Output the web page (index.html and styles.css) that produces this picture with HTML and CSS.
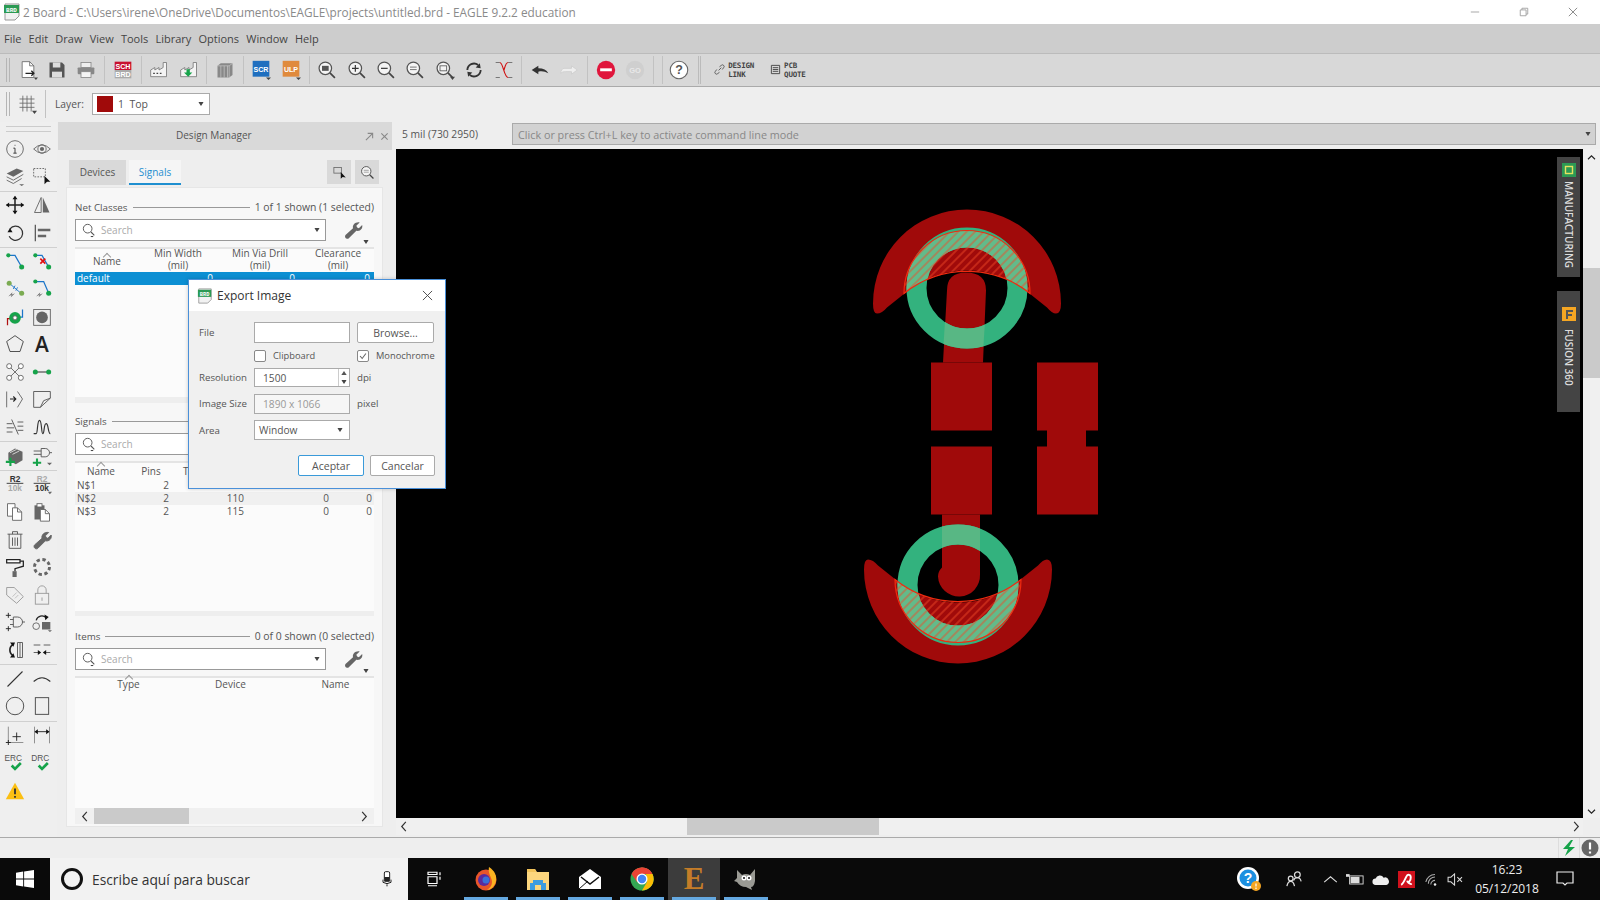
FILE: index.html
```html
<!DOCTYPE html>
<html lang="es">
<head>
    <meta charset="UTF-8">
    <title>2 Board - EAGLE 9.2.2 education</title>
    <link rel="stylesheet" href="styles.css">
</head>
<body>
    <!-- Shared icons -->
    <svg class="defs" width="0" height="0">
        <symbol id="wrench" viewBox="0 0 24 24"><path d="M20 3l-4 4 1 2 2 1 4-4c1 4-2 8-7 7L7 22c-2 2-6-1-4-4l9-8C11 6 15 2 20 3z" fill="#666"/></symbol>
        <symbol id="find" viewBox="0 0 24 24"><circle cx="10" cy="10" r="6.5" fill="none" stroke="#555" stroke-width="1.4"/><path d="M15 15l5 5" stroke="#555" stroke-width="1.6"/><path d="M14 21h5l-2.500 2z" fill="#222"/></symbol>
        <symbol id="lens" viewBox="0 0 24 24"><circle cx="10" cy="10" r="7.500" fill="#f4f4f4" stroke="#555" stroke-width="1.500"/><path d="M15.500 15.500l6 6" stroke="#444" stroke-width="2"/></symbol>
        <symbol id="tri" viewBox="0 0 8 6"><path d="M0 0h8l-4 6z" fill="#444"/></symbol>
    </svg>

    <!-- Title bar -->
    <header class="titlebar">
        <svg class="app-icon" viewBox="0 0 18 18"><path d="M2 1h14v12l-4 4H2z" fill="#f2f2f2" stroke="#999"/><rect x="1" y="2" width="15" height="8" fill="#2c9a54"/><text x="8.500" y="8.500" class="brd-text">BRD</text></svg>
        <span class="title-text">2 Board - C:\Users\irene\OneDrive\Documentos\EAGLE\projects\untitled.brd - EAGLE 9.2.2 education</span>
        <div class="win-buttons">
            <svg viewBox="0 0 12 12"><path d="M1 6h10" stroke="#999"/></svg>
            <svg viewBox="0 0 12 12"><path d="M1.500 3.500h7v7h-7zM3.500 3.500v-2h7v7h-2" fill="none" stroke="#999"/></svg>
            <svg viewBox="0 0 12 12"><path d="M1 1l10 10M11 1L1 11" stroke="#777"/></svg>
        </div>
    </header>

    <!-- Menu -->
    <nav class="menubar">
        <span>File</span><span>Edit</span><span>Draw</span><span>View</span><span>Tools</span><span>Library</span><span>Options</span><span>Window</span><span>Help</span>
    </nav>

    <!-- Main toolbar -->
    <div class="toolbar">
        <div class="grip"></div>
        <div class="tb"><svg viewBox="0 0 24 24"><path d="M5 2h9l5 5v14H5z" fill="#fff" stroke="#666"/><path d="M14 2v5h5" fill="none" stroke="#666"/><path d="M9 16h10M16 13l3 3-3 3" fill="none" stroke="#222" stroke-width="1.600"/><path d="M19 21h5l-2.500 3z" fill="#444"/></svg></div>
        <div class="tb"><svg viewBox="0 0 24 24"><path d="M3 3h15l3 3v15H3z" fill="#555"/><rect x="7" y="3" width="9" height="6" fill="#ddd"/><rect x="6" y="14" width="12" height="7" fill="#ddd"/></svg></div>
        <div class="tb"><svg viewBox="0 0 24 24"><rect x="6" y="3" width="12" height="6" fill="#eee" stroke="#888"/><rect x="2" y="9" width="20" height="8" rx="1" fill="#888"/><rect x="6" y="14" width="12" height="7" fill="#f4f4f4" stroke="#888"/></svg></div>
        <div class="sep"></div>
        <div class="tb"><svg viewBox="0 0 24 24"><rect x="2" y="2" width="20" height="10" fill="#c8102e"/><rect x="2" y="12" width="20" height="10" fill="#aaa"/><text x="12" y="10.500" class="badge-text">SCH</text><text x="12" y="20.500" class="badge-text">BRD</text></svg></div>
        <div class="sep"></div>
        <div class="tb"><svg viewBox="0 0 24 24"><path d="M2 20V12l5-3v3l5-3v3l5-3V3h4v17z" fill="#f4f4f4" stroke="#777"/><path d="M5 16h2M9 16h2M13 16h2" stroke="#444" stroke-width="1.500"/></svg></div>
        <div class="tb"><svg viewBox="0 0 24 24"><path d="M2 20V12l5-3v3l5-3v3l5-3V3h4v17z" fill="#f4f4f4" stroke="#777"/><path d="M9 11h4v4h3l-5 5-5-5h3z" fill="#16a34a"/></svg></div>
        <div class="sep"></div>
        <div class="tb"><svg viewBox="0 0 24 24"><path d="M3 7l4-3h14v14l-4 3H3z" fill="#888"/><path d="M7 7v14M11 7v14M15 7v14M3 7h14l4-3M17 7v14" fill="none" stroke="#ccc" stroke-width=".8"/></svg></div>
        <div class="sep"></div>
        <div class="tb"><svg viewBox="0 0 24 24"><rect x="2" y="1" width="20" height="19" fill="#1f6fbf"/><text x="12" y="14" class="badge-text">SCR</text><path d="M18 21h6l-3 3z" fill="#444"/></svg></div>
        <div class="tb"><svg viewBox="0 0 24 24"><rect x="2" y="1" width="20" height="19" fill="#e08a3c"/><text x="12" y="14" class="badge-text">ULP</text><path d="M18 21h6l-3 3z" fill="#444"/></svg></div>
        <div class="sep"></div>
        <div class="tb"><svg viewBox="0 0 24 24"><use href="#lens"/><rect x="6" y="7" width="8" height="6" fill="#555"/></svg></div>
        <div class="tb"><svg viewBox="0 0 24 24"><use href="#lens"/><path d="M6 10h8M10 6v8" stroke="#333" stroke-width="1.400"/></svg></div>
        <div class="tb"><svg viewBox="0 0 24 24"><use href="#lens"/><path d="M6 10h8" stroke="#333" stroke-width="1.400"/></svg></div>
        <div class="tb"><svg viewBox="0 0 24 24"><use href="#lens"/><path d="M6 8.500h8M6 11.500h8" stroke="#777" stroke-width="1.200"/></svg></div>
        <div class="tb"><svg viewBox="0 0 24 24"><use href="#lens"/><rect x="6" y="7" width="8" height="6" fill="none" stroke="#555"/><path d="M18 20h6l-3 4z" fill="#444"/></svg></div>
        <div class="tb"><svg viewBox="0 0 24 24"><path d="M4 12a8 8 0 0 1 13-6M20 12a8 8 0 0 1-13 6" fill="none" stroke="#333" stroke-width="2.200"/><path d="M14 9l6 1-1-6zM10 15l-6-1 1 6z" fill="#333"/></svg></div>
        <div class="tb"><svg viewBox="0 0 24 24"><path d="M2 3h5M17 3h5M2 21h5M17 21h5" stroke="#777" stroke-width="1.200"/><path d="M7 3c4 0 5 18 10 18M17 3c-3 0-4 6-5 9" fill="none" stroke="#d01010" stroke-width="1.400"/></svg></div>
        <div class="sep"></div>
        <div class="tb"><svg viewBox="0 0 24 24"><path d="M2 12l8-5v3c6 0 10 2 12 6-4-2-7-3-12-2v3z" fill="#333"/></svg></div>
        <div class="tb"><svg viewBox="0 0 24 24"><path d="M22 12l-7-5v3H6c-2 0-4 3-4 6 2-2 4-2 6-2h7v3z" fill="#eee" stroke="#ccc"/></svg></div>
        <div class="sep"></div>
        <div class="tb"><svg viewBox="0 0 24 24"><circle cx="12" cy="12" r="11" fill="#e0163c"/><rect x="5" y="10" width="14" height="3.500" fill="#fff"/></svg></div>
        <div class="tb"><svg viewBox="0 0 24 24"><circle cx="12" cy="12" r="11" fill="#cfcfcf"/><text x="12" y="15" class="go-text">GO</text></svg></div>
        <div class="sep"></div>
        <div class="sep tight"></div>
        <div class="tb"><svg viewBox="0 0 24 24"><circle cx="12" cy="12" r="10.500" fill="#fff" stroke="#666" stroke-width="1.300"/><text x="12" y="17" class="help-text">?</text></svg></div>
        <div class="sep double"></div>
        <div class="tb-text link">
            <svg viewBox="0 0 12 12"><path d="M5 7l3-3M3 6L1.500 8a1.500 1.500 0 0 0 2.500 2.500L6 9M6 3l2-1.500A1.500 1.500 0 0 1 10.500 4L9 6" fill="none" stroke="#555"/></svg>
            <span>DESIGN<br>LINK</span>
        </div>
        <div class="tb-text quote">
            <svg viewBox="0 0 12 12"><path d="M1.500 1.500h9v9h-9zM3 4h6M3 6h6M3 8h6" fill="none" stroke="#444"/></svg>
            <span>PCB<br>QUOTE</span>
        </div>
    </div>

    <!-- Layer toolbar -->
    <div class="layerbar">
        <div class="grip"></div>
        <div class="grid-btn"><svg viewBox="0 0 24 24"><path d="M3 6h18M3 11h18M3 16h18M7 2v19M12 2v19M17 2v19" stroke="#666"/><path d="M18 20h6l-3 4z" fill="#444"/></svg></div>
        <div class="sep"></div>
        <span class="layer-label">Layer:</span>
        <div class="layer-combo">
            <span class="swatch"></span>
            <span class="layer-name">1&nbsp; Top</span>
            <svg class="tri" viewBox="0 0 8 6"><use href="#tri"/></svg>
        </div>
    </div>

    <div class="main">
        <!-- Left command strip -->
        <aside class="toolstrip">
            <div class="strip-grip"></div>
            <div class="tool-group">
                <svg viewBox="0 0 24 24"><circle cx="12" cy="12" r="10"/><path d="M12 7v1M10 11h2v6M10 17h4" stroke="#333"/></svg>
                <svg viewBox="0 0 24 24"><path d="M2 12q10-10 20 0q-10 10-20 0z"/><circle cx="12" cy="12" r="5"/><circle cx="12" cy="12" r="2.500" class="solid"/></svg>
                <svg viewBox="0 0 24 24"><path d="M2 9l12-6 8 3-12 7z" class="solid"/><path d="M2 13l8 4 12-7M2 17l8 4 10-6"/><path d="M17 22h6l-3 2z" class="solid"/></svg>
                <svg viewBox="0 0 24 24"><path d="M2 3h14v10H2z" stroke-dasharray="2 1.500"/><path d="M15 12v10l3-3 4 0z" class="black"/></svg>
            </div>
            <div class="tool-group">
                <svg viewBox="0 0 24 24"><path d="M12 2v20M2 12h20" stroke="#222" stroke-width="1.800"/><path d="M12 1l3 4H9zM12 23l3-4H9zM1 12l4-3v6zM23 12l-4-3v6z" class="black"/></svg>
                <svg viewBox="0 0 24 24"><path d="M11 3v18H3z"/><path d="M13 3v18h8z" class="solid"/></svg>
                <svg viewBox="0 0 24 24"><path d="M6 7a8.500 8.500 0 1 1-1 9" stroke="#333" stroke-width="1.500"/><path d="M3 11l6 0-3-5z" class="black"/></svg>
                <svg viewBox="0 0 24 24"><path d="M4 2v20" stroke="#555" stroke-width="1.500"/><path d="M7 7h15v3H7zM7 14h10v3H7z" class="solid"/></svg>
            </div>
            <div class="tool-group">
                <svg viewBox="0 0 24 24"><path d="M4 4h8l8 14" stroke="#1b75c9" stroke-width="1.500"/><circle cx="4" cy="4" r="2.500" class="node"/><circle cx="20" cy="18" r="3" class="node"/></svg>
                <svg viewBox="0 0 24 24"><path d="M4 4h8l8 14" stroke="#1b75c9" stroke-width="1.500"/><circle cx="4" cy="4" r="2.500" class="node"/><circle cx="20" cy="18" r="3" class="node"/><path d="M10 8l6 6M16 8l-6 6" stroke="#e01010" stroke-width="2"/></svg>
                <svg viewBox="0 0 24 24"><path d="M5 5l14 12M12 8l-2 4M15 10l-2 4" stroke="#1b75c9"/><circle cx="5" cy="5" r="3" class="dim-node"/><circle cx="20" cy="17" r="3" class="dim-node"/><path d="M4 21l5-5-1 3 4-2-5 5 1-3z" class="solid"/></svg>
                <svg viewBox="0 0 24 24"><path d="M4 3h10l6 14" stroke="#1b75c9" stroke-width="1.500"/><circle cx="4" cy="3" r="2.500" class="node"/><circle cx="20" cy="17" r="3" class="node"/><path d="M5 21l5-5-1 3 4-2-5 5 1-3z" class="solid"/></svg>
                <svg viewBox="0 0 24 24"><path d="M3 22v-8h6" stroke="#b01010" stroke-width="1.500"/><path d="M15 12h6V3" stroke="#1b75c9" stroke-width="1.500"/><circle cx="12" cy="13" r="7" class="node"/><circle cx="12" cy="13" r="2.500" class="white"/></svg>
                <svg viewBox="0 0 24 24"><rect x="2" y="3" width="20" height="19"/><circle cx="12" cy="12.500" r="7" class="solid"/></svg>
                <svg viewBox="0 0 24 24"><path d="M12 2l10 7-4 12H6L2 9z" stroke="#444"/></svg>
                <svg viewBox="0 0 24 24"><text x="12" y="22" class="letter">A</text></svg>
                <svg viewBox="0 0 24 24"><path d="M5 5l14 14M19 5L5 19"/><circle cx="5" cy="5" r="3" class="white"/><circle cx="19" cy="5" r="3" class="white"/><circle cx="5" cy="19" r="3" class="white"/><circle cx="19" cy="19" r="3" class="white"/></svg>
                <svg viewBox="0 0 24 24"><path d="M3 12h18" stroke="#555" stroke-width="1.500"/><circle cx="4" cy="12" r="3" class="node"/><circle cx="20" cy="12" r="3" class="node"/></svg>
                <svg viewBox="0 0 24 24"><path d="M2 3v19M15 3l6 9-6 10" stroke="#666"/><path d="M6 12h7M10 9l3 3-3 3" stroke="#222" stroke-width="1.300"/></svg>
                <svg viewBox="0 0 24 24"><path d="M2 3h20v8L10 22H2zM10 22l4-8M14 14l8-3" stroke="#555"/></svg>
                <svg viewBox="0 0 24 24"><path d="M2 8h7M2 13h9M2 18h7M15 6h7M15 11h7M15 16h7M8 3l8 18" stroke="#555"/></svg>
                <svg viewBox="0 0 24 24"><path d="M2 20h3c2 0 1-16 4-16s2 16 4 16 1-12 4-12 2 12 5 12" stroke="#333" stroke-width="1.400"/></svg>
            </div>
            <div class="tool-group">
                <svg viewBox="0 0 24 24"><path d="M4 8l8-5 9 4v10l-8 5-9-5z" class="solid"/><path d="M6 8l8-4M9 10l8-4" stroke="#ddd"/><path d="M1 19h11M6.500 14v10" stroke="#16a34a" stroke-width="2.500"/></svg>
                <svg viewBox="0 0 24 24"><path d="M11 3h5a5 5 0 0 1 0 10h-5zM2 6h9M2 10h9M21 8h3" stroke="#555"/><path d="M1 20h10M6 15v9" stroke="#16a34a" stroke-width="2.500"/><path d="M18 20h6l-3 3z" class="solid"/></svg>
            </div>
            <div class="tool-group">
                <svg viewBox="0 0 24 24"><text x="12" y="8" class="r-text">R2</text><path d="M2 10h20" stroke="#333"/><text x="12" y="19" class="r-text dim">10k</text></svg>
                <svg viewBox="0 0 24 24"><text x="12" y="8" class="r-text dim">R2</text><path d="M2 10h20" stroke="#333"/><text x="12" y="19" class="r-text">10k</text><path d="M19 20h5l-2.500 3z" class="solid"/></svg>
                <svg viewBox="0 0 24 24"><path d="M3 2h9v15H3z" class="white"/><path d="M9 7h6l5 5v10H9z" class="white"/><path d="M15 7v5h5"/></svg>
                <svg viewBox="0 0 24 24"><path d="M3 4h12v17H3z" class="solid"/><rect x="6" y="2" width="6" height="4" class="white"/><path d="M10 9h6l5 5v9H10z" class="white"/><path d="M16 9v5h5"/></svg>
                <svg viewBox="0 0 24 24"><path d="M3 5h18M9 5V2h6v3M5 5v17h14V5M9 9v10M12 9v10M15 9v10" stroke="#555"/></svg>
                <svg viewBox="0 0 24 24"><use href="#wrench"/></svg>
                <svg viewBox="0 0 24 24"><path d="M2 3h16v4H2z" class="white" stroke="#222" stroke-width="1.500"/><path d="M18 5h4v6l-10 3v3" stroke="#222" stroke-width="1.500"/><rect x="9" y="17" width="5" height="7" class="solid"/></svg>
                <svg viewBox="0 0 24 24"><circle cx="12" cy="12" r="9" stroke="#666" stroke-width="3.500" stroke-dasharray="4 3.100"/></svg>
                <svg viewBox="0 0 24 24" class="faded"><path d="M2 3h9l11 11-8 8L2 12zM6 7h.1" stroke="#777"/><path d="M9 14l5-5M12 16l4-4" stroke="#aaa"/></svg>
                <svg viewBox="0 0 24 24" class="faded"><rect x="4" y="10" width="16" height="13" stroke="#777"/><path d="M7 10V6a5 5 0 0 1 10 0v4M12 15v4" stroke="#777"/></svg>
                <svg viewBox="0 0 24 24"><path d="M10 6h5a6 6 0 0 1 0 12h-5zM21 12h3M6 9h4M6 15h4" stroke="#555"/><path d="M1 4h6M4 1v6M1 20h6M4 17v6" stroke="#222"/></svg>
                <svg viewBox="0 0 24 24"><circle cx="5" cy="17" r="4"/><rect x="12" y="12" width="10" height="9" class="solid"/><path d="M5 10a7 7 0 0 1 12-3" stroke="#222" stroke-width="1.500"/><path d="M15 3l5 3-4 4z" class="black"/><path d="M19 22h5l-2.500 2z" class="solid"/></svg>
                <svg viewBox="0 0 24 24"><path d="M15 3h6v18h-6zM18 3v18" stroke="#555"/><path d="M10 5a8 8 0 0 0 0 14" stroke="#222" stroke-width="2"/><path d="M6 3l6 0-2 5zM6 21l6 0-2-5z" class="black"/></svg>
                <svg viewBox="0 0 24 24"><path d="M2 6h8M14 6h8M2 15h7M15 15h7" stroke="#555"/><path d="M11 15l-4-3v6zM13 15l4-3v6z" class="black"/></svg>
            </div>
            <div class="tool-group">
                <svg viewBox="0 0 24 24"><path d="M3 21L21 3" stroke="#333" stroke-width="1.300"/></svg>
                <svg viewBox="0 0 24 24"><path d="M2 15q10-9 20 0" stroke="#333" stroke-width="1.300"/></svg>
                <svg viewBox="0 0 24 24"><circle cx="12" cy="12" r="10.500" stroke="#444"/></svg>
                <svg viewBox="0 0 24 24"><rect x="4" y="2" width="16" height="20" stroke="#444"/></svg>
            </div>
            <div class="tool-group last">
                <svg viewBox="0 0 24 24"><path d="M4 2v19M4 21h18" stroke="#888"/><path d="M9 14h10M14 9v10M1 21h6M4 18v6" stroke="#222"/></svg>
                <svg viewBox="0 0 24 24"><path d="M3 2v20M21 2v20" stroke="#888"/><path d="M4 8h16" stroke="#222"/><path d="M3 8l4-3v6zM21 8l-4-3v6z" class="black"/></svg>
                <svg viewBox="0 0 24 24"><text x="10" y="9" class="erc-text">ERC</text><path d="M8 15l4 4 7-7" stroke="#16a34a" stroke-width="3.200"/></svg>
                <svg viewBox="0 0 24 24"><text x="10" y="9" class="erc-text">DRC</text><path d="M8 15l4 4 7-7" stroke="#16a34a" stroke-width="3.200"/></svg>
                <svg class="warn" viewBox="0 0 24 24"><path d="M12 2l11 20H1z" fill="#fbbf13" stroke="none"/><path d="M12 9v7M12 18v2" stroke="#333" stroke-width="2.200"/></svg>
            </div>
        </aside>

        <!-- Design Manager -->
        <section class="dock">
            <div class="dock-head">
                <span>Design Manager</span>
                <svg class="dock-btn pin" viewBox="0 0 10 10"><path d="M1 9l7-7M3 1.500h5.500V7" fill="none" stroke="#888" stroke-width="1.200"/></svg>
                <svg class="dock-btn" viewBox="0 0 10 10"><path d="M1.500 1.500l7 7M8.500 1.500l-7 7" stroke="#888" stroke-width="1.200"/></svg>
            </div>
            <div class="tabs">
                <div class="tab">Devices</div>
                <div class="tab active">Signals</div>
                <div class="tab-tools">
                    <div class="square-btn"><svg viewBox="0 0 24 24"><rect x="3" y="4" width="12" height="9" fill="none" stroke="#666" stroke-width="1.300"/><path d="M14 11v11l3-3 5 1z" fill="#111"/></svg></div>
                    <div class="square-btn"><svg viewBox="0 0 24 24"><use href="#lens"/><path d="M6 8.500h8M6 11.500h8" stroke="#777"/></svg></div>
                </div>
            </div>
            <div class="dock-body">
                <div class="sec-head"><span class="sec-title">Net Classes</span><i></i><span>1 of 1 shown (1 selected)</span></div>
                <div class="search-row">
                    <div class="search"><svg class="find" viewBox="0 0 24 24"><use href="#find"/></svg><span>Search</span><svg class="tri" viewBox="0 0 8 6"><use href="#tri"/></svg></div>
                    <div class="wrench"><svg viewBox="0 0 24 24"><use href="#wrench"/></svg><svg class="tri" viewBox="0 0 8 6"><use href="#tri"/></svg></div>
                </div>
                <div class="list nets">
                    <div class="thead">
                        <span class="sorted">Name</span><span>Min Width<br>(mil)</span><span>Min Via Drill<br>(mil)</span><span>Clearance<br>(mil)</span>
                    </div>
                    <div class="trow selected"><span>default</span><span>0</span><span>0</span><span>0</span></div>
                </div>
                <div class="splitter"></div>

                <div class="sec-head"><span class="sec-title">Signals</span><i></i></div>
                <div class="search-row">
                    <div class="search"><svg class="find" viewBox="0 0 24 24"><use href="#find"/></svg><span>Search</span><svg class="tri" viewBox="0 0 8 6"><use href="#tri"/></svg></div>
                </div>
                <div class="list signals">
                    <div class="thead">
                        <span class="sorted">Name</span><span>Pins</span><span class="col-t">T</span>
                    </div>
                    <div class="trow"><span>N$1</span><span>2</span></div>
                    <div class="trow alt"><span>N$2</span><span>2</span><span>110</span><span>0</span><span>0</span></div>
                    <div class="trow"><span>N$3</span><span>2</span><span>115</span><span>0</span><span>0</span></div>
                </div>
                <div class="splitter thin"></div>

                <div class="sec-head"><span class="sec-title">Items</span><i></i><span>0 of 0 shown (0 selected)</span></div>
                <div class="search-row">
                    <div class="search"><svg class="find" viewBox="0 0 24 24"><use href="#find"/></svg><span>Search</span><svg class="tri" viewBox="0 0 8 6"><use href="#tri"/></svg></div>
                    <div class="wrench"><svg viewBox="0 0 24 24"><use href="#wrench"/></svg><svg class="tri" viewBox="0 0 8 6"><use href="#tri"/></svg></div>
                </div>
                <div class="list items">
                    <div class="thead">
                        <span class="sorted">Type</span><span>Device</span><span class="col-name">Name</span>
                    </div>
                </div>
                <div class="hbar dock-hbar">
                    <svg viewBox="0 0 8 12"><path d="M6 1L1.500 6 6 11" fill="none" stroke="#333" stroke-width="1.300"/></svg>
                    <div class="hbar-track"><div class="hbar-thumb"></div></div>
                    <svg viewBox="0 0 8 12"><path d="M2 1l4.500 5L2 11" fill="none" stroke="#333" stroke-width="1.300"/></svg>
                </div>
            </div>
        </section>

        <!-- Board editor -->
        <section class="work">
            <div class="cmdbar">
                <span class="coords">5 mil (730 2950)</span>
                <div class="cmdline">
                    <span>Click or press Ctrl+L key to activate command line mode</span>
                    <svg class="tri" viewBox="0 0 8 6"><use href="#tri"/></svg>
                </div>
            </div>
            <div class="viewport">
                <div class="canvas">
                    <svg class="board" viewBox="396 149 1187 668">
                        <defs>
                            <pattern id="hatch" patternUnits="userSpaceOnUse" width="6" height="6" patternTransform="rotate(45)">
                                <path d="M1 0v6" stroke="#ef4a28" stroke-width=".9"/>
                            </pattern>
                            <clipPath id="topZone"><path d="M904 293A63 63 0 0 1 1030 293A101 101 0 0 0 904 293z"/></clipPath>
                            <clipPath id="botZone"><path d="M895 579A63 63 0 0 0 1021 579A101 101 0 0 1 895 579z"/></clipPath>
                            <clipPath id="topCross"><path d="M945 320h40l-2 32h-40z"/></clipPath>
                            <clipPath id="botCross"><rect x="942" y="515" width="38" height="40"/></clipPath>
                        </defs>
                        <g fill="#a00a0a">
                            <path d="M873 303A94 94 0 0 1 1061 303Q1061 313 1056 313Q1052 313 1047 307L1027 291A96 96 0 0 0 907 291L887 307Q882 313 877 313Q873 313 873 303z"/>
                            <path d="M947 290Q947 272 966 272Q986 272 986 290L983 362H943z"/>
                            <rect x="931" y="362" width="61" height="68"/>
                            <rect x="931" y="446" width="61" height="68"/>
                            <path d="M1037 362h61v68h-12v16h12v68h-61v-68h10v-16h-10z"/>
                            <path d="M942 514h38v60a21 21 0 1 1-42 2q0-5 4-9z"/>
                            <path d="M864 569A94 94 0 0 0 1052 569Q1052 559 1047 559Q1043 559 1038 565L1018 581A96 96 0 0 1 898 581L878 565Q873 559 868 559Q864 559 864 569z"/>
                        </g>
                        <circle cx="967" cy="287.500" r="50.500" fill="none" stroke="#33b27e" stroke-width="20"/>
                        <circle cx="958" cy="584.500" r="50.500" fill="none" stroke="#33b27e" stroke-width="20"/>
                        <circle cx="967" cy="287.500" r="50.500" fill="none" stroke="#58b784" stroke-width="20" clip-path="url(#topCross)"/>
                        <circle cx="958" cy="584.500" r="50.500" fill="none" stroke="#58b784" stroke-width="20" clip-path="url(#botCross)"/>
                        <circle cx="967" cy="287.500" r="50.500" fill="none" stroke="#62bb8a" stroke-width="20" clip-path="url(#topZone)"/>
                        <circle cx="958" cy="584.500" r="50.500" fill="none" stroke="#62bb8a" stroke-width="20" clip-path="url(#botZone)"/>
                        <path d="M904 293A63 63 0 0 1 1030 293A101 101 0 0 0 904 293z" fill="url(#hatch)" stroke="#f02a10" stroke-width="1.200"/>
                        <path d="M895 579A63 63 0 0 0 1021 579A101 101 0 0 1 895 579z" fill="url(#hatch)" stroke="#f02a10" stroke-width="1.200"/>
                    </svg>
                    <div class="side-tab manufacturing">
                        <svg viewBox="0 0 14 14"><rect width="14" height="14" fill="#2c9a54"/><rect x="3.500" y="3.500" width="7" height="7" fill="none" stroke="#e8e060" stroke-width="1.400"/></svg>
                        <span>MANUFACTURING</span>
                    </div>
                    <div class="side-tab fusion">
                        <svg viewBox="0 0 14 14"><rect width="14" height="14" fill="#f5a623"/><path d="M4 3h7v2H6v2h4v2H6v3H4z" fill="#555"/></svg>
                        <span>FUSION 360</span>
                    </div>
                </div>
                <div class="vbar">
                    <svg viewBox="0 0 12 8"><path d="M2 6l4-4 4 4" fill="none" stroke="#222" stroke-width="1.300"/></svg>
                    <div class="vbar-track"><div class="vbar-thumb"></div></div>
                    <svg viewBox="0 0 12 8"><path d="M2 2l4 4 4-4" fill="none" stroke="#222" stroke-width="1.300"/></svg>
                </div>
            </div>
            <div class="hbar work-hbar">
                <svg viewBox="0 0 8 12"><path d="M6 1L1.500 6 6 11" fill="none" stroke="#333" stroke-width="1.300"/></svg>
                <div class="hbar-track"><div class="hbar-thumb"></div></div>
                <svg viewBox="0 0 8 12"><path d="M2 1l4.500 5L2 11" fill="none" stroke="#333" stroke-width="1.300"/></svg>
            </div>
        </section>
    </div>

    <!-- Status bar -->
    <div class="statusbar">
        <div class="status-cell"><svg viewBox="0 0 18 18"><path d="M11 1L3 10h5l-3 7 10-9h-6l4-7z" fill="#16a34a"/></svg></div>
        <div class="status-cell"><svg viewBox="0 0 18 18"><circle cx="9" cy="9" r="8.500" fill="#666"/><path d="M9 3.500v7M9 12.500v2" stroke="#fff" stroke-width="2.200"/></svg></div>
    </div>

    <!-- Windows taskbar -->
    <footer class="taskbar">
        <div class="start"><svg viewBox="0 0 20 20"><path d="M0 3l8-1.200V9.500H0zM9 1.600L20 0v9.500H9zM0 10.500h8v7.700L0 17zM9 10.500h11V20L9 18.400z" fill="#fff"/></svg></div>
        <div class="task-search">
            <svg class="cortana" viewBox="0 0 24 24"><circle cx="12" cy="12" r="9.500" fill="none" stroke="#111" stroke-width="3"/></svg>
            <span>Escribe aquí para buscar</span>
            <svg class="mic" viewBox="0 0 24 24"><rect x="8" y="1" width="8" height="14" rx="2" fill="#fff" stroke="#222" stroke-width="1.500"/><rect x="8" y="9" width="8" height="7" fill="#222"/><path d="M6 13v4q6 4 12 0v-4M12 20v3" fill="none" stroke="#222" stroke-width="1.500"/></svg>
        </div>
        <div class="task-icons">
            <div class="task-app taskview"><svg viewBox="0 0 24 24"><path d="M4 3h12v3H4zM4 9h12v9H4zM4 21h12M20 3v4M20 9v4" fill="none" stroke="#fff" stroke-width="1.600"/></svg></div>
            <div class="task-app open"><svg viewBox="0 0 24 24"><circle cx="12" cy="13" r="10.500" fill="#e8552a"/><circle cx="10" cy="13" r="6" fill="#5b2a9d"/><path d="M15 0c6 4 8 9 7 14-1 5-5 9-9 9 5-3 6-8 4-12-1-3-3-6-2-11z" fill="#fbb321"/><circle cx="12" cy="13" r="3.500" fill="#3a6fd8"/></svg></div>
            <div class="task-app open"><svg viewBox="0 0 24 24"><path d="M1 2h8l2 3h12v18H1z" fill="#fcd67e"/><path d="M1 2h8l1 3H1z" fill="#f2c35a"/><path d="M7 13h10v3h3v7H4v-7h3z" fill="#3d9ce0"/><rect x="9" y="18" width="6" height="5" fill="#fcd67e"/></svg></div>
            <div class="task-app open"><svg viewBox="0 0 24 24"><path d="M1 10L12 2l11 8v12H1z" fill="#fff"/><path d="M3 10l9 7 9-7" fill="none" stroke="#111" stroke-width="1.500"/><path d="M1 22l9-8" stroke="#111"/></svg></div>
            <div class="task-app open"><svg viewBox="0 0 24 24"><circle cx="12" cy="12" r="11.500" fill="#34a853"/><path d="M12 .5A11.500 11.500 0 0 1 22 6.500H12L5 3.500A11.500 11.500 0 0 1 12 .5z" fill="#ea4335"/><path d="M2 6l5 9 5 8.500A11.500 11.500 0 0 0 22.500 7H12z" fill="#34a853"/><path d="M22.500 7a11.500 11.500 0 0 1-10.500 16.500L17 15l-1-8z" fill="#fbbc05"/><path d="M12 .5A11.500 11.500 0 0 0 1.500 7L7 15l5-8h10.500A11.500 11.500 0 0 0 12 .5z" fill="#ea4335"/><circle cx="12" cy="12" r="5.500" fill="#fff"/><circle cx="12" cy="12" r="4.200" fill="#4285f4"/></svg></div>
            <div class="task-app open current"><span class="eagle-e">E</span></div>
            <div class="task-app open"><svg viewBox="0 0 24 24"><path d="M3 3l5 5q4-2 8 0l5-6v12q-1 6-4 6l1 3-6-3q-6 0-9-5l-3-1 3-3z" fill="#9a9a94"/><circle cx="10" cy="11" r="2.500" fill="#fff"/><circle cx="15" cy="11" r="2.500" fill="#fff"/><circle cx="10" cy="11" r="1" fill="#111"/><circle cx="15" cy="11" r="1" fill="#111"/></svg></div>
        </div>
        <div class="tray">
            <div class="tray-help">
                <svg viewBox="0 0 26 26"><circle cx="12" cy="12" r="11" fill="#fff"/><circle cx="12" cy="12" r="8.500" fill="#1b8fe0"/><text x="12" y="17" class="help-white">?</text><circle cx="20" cy="20" r="5" fill="#f5a623"/><path d="M20 17.500v3M20 21.500v1.500" stroke="#fff" stroke-width="1.200"/></svg>
            </div>
            <svg class="tray-people" viewBox="0 0 20 20"><circle cx="13" cy="5" r="3" fill="none" stroke="#ddd" stroke-width="1.300"/><circle cx="6" cy="9" r="2.500" fill="none" stroke="#ddd" stroke-width="1.300"/><path d="M2 17q1-5 4-5t4 5M9 11q1-3 4-3t4 4" fill="none" stroke="#ddd" stroke-width="1.300"/></svg>
            <svg class="tray-chevron" viewBox="0 0 16 10"><path d="M1 8l7-6 7 6" fill="none" stroke="#ddd" stroke-width="1.200"/></svg>
            <svg class="tray-battery" viewBox="0 0 20 14"><rect x="4" y="3" width="15" height="9" fill="none" stroke="#ddd"/><rect x="5" y="4" width="10" height="7" fill="#ddd"/><path d="M0 1h4v3H0z" fill="#ddd"/></svg>
            <svg class="tray-cloud" viewBox="0 0 20 14"><path d="M4 13a3.500 3.500 0 0 1 0-7 5 5 0 0 1 9-1 4 4 0 0 1 3 8z" fill="#eee"/></svg>
            <div class="tray-avira"><svg viewBox="0 0 16 16"><path d="M3 13c2-1 4-6 5-8 1-2 4-2 4 1 0 3-2 5-3 4s2 3 4 2" fill="none" stroke="#fff" stroke-width="1.800"/></svg></div>
            <svg class="tray-wifi" viewBox="0 0 18 18"><path d="M1 12a11 11 0 0 1 11-9M4 14a8 8 0 0 1 8-8M7 15a5 5 0 0 1 5-5" fill="none" stroke="#aaa" stroke-width="1.300"/><circle cx="12" cy="15" r="1.500" fill="#eee"/></svg>
            <svg class="tray-mute" viewBox="0 0 18 14"><path d="M1 4.500h3L8 1v12L4 9.500H1z" fill="none" stroke="#ddd" stroke-width="1.100"/><path d="M11 4.500l5 5M16 4.500l-5 5" stroke="#ddd" stroke-width="1.100"/></svg>
            <div class="clock"><span>16:23</span><span>05/12/2018</span></div>
            <svg class="tray-notify" viewBox="0 0 18 16"><path d="M1 1h16v11h-6l-2 2-2-2H1z" fill="none" stroke="#eee" stroke-width="1.200"/></svg>
        </div>
    </footer>

    <!-- Export Image dialog -->
    <div class="dialog">
        <div class="dlg-title">
            <svg viewBox="0 0 18 18"><path d="M2 1h14v12l-4 4H2z" fill="#f2f2f2" stroke="#999"/><rect x="1" y="2" width="15" height="8" fill="#2c9a54"/><text x="8.500" y="8.500" class="brd-text">BRD</text></svg>
            <span>Export Image</span>
            <svg class="dlg-close" viewBox="0 0 12 12"><path d="M1 1l10 10M11 1L1 11" stroke="#444" stroke-width="1"/></svg>
        </div>
        <div class="dlg-body">
            <div class="dlg-grid">
                <label>File</label>
                <div class="field"></div>
                <div class="btn wide">Browse...</div>

                <span></span>
                <div class="check"><i class="box"></i>Clipboard</div>
                <div class="check"><i class="box"><svg viewBox="0 0 12 12"><path d="M2.500 6l2.500 3 4.500-6" fill="none" stroke="#666" stroke-width="1.300"/></svg></i>Monochrome</div>

                <label>Resolution</label>
                <div class="field spin"><span>1500</span><div class="spin-btns"><svg viewBox="0 0 8 6"><path d="M0 6l4-6 4 6z" fill="#555"/></svg><svg viewBox="0 0 8 6"><use href="#tri"/></svg></div></div>
                <span class="unit">dpi</span>

                <label>Image Size</label>
                <div class="field readonly"><span>1890 x 1066</span></div>
                <span class="unit">pixel</span>

                <label>Area</label>
                <div class="field combo"><span>Window</span><svg class="tri" viewBox="0 0 8 6"><use href="#tri"/></svg></div>
                <span></span>
            </div>
            <div class="dlg-buttons">
                <div class="btn default">Aceptar</div>
                <div class="btn">Cancelar</div>
            </div>
        </div>
    </div>
</body>
</html>
```
FILE: styles.css
```css
* {
    box-sizing: border-box;
}
html, body {
    margin: 0;
    height: 100%;
}
body {
    position: relative;
    display: flex;
    flex-direction: column;
    width: 1600px;
    height: 900px;
    overflow: hidden;
    font-family: "Open Sans", "Noto Sans", sans-serif;
    font-size: 10px;
    color: #555;
    background-color: #eee;
}
svg {
    display: block;
    flex: none;
}
.defs {
    position: absolute;
}

/* svg text */
.brd-text {
    font: bold 6px "Liberation Mono", monospace;
    fill: #fff;
    text-anchor: middle;
}
.badge-text {
    font: bold 8.500px "Liberation Sans Narrow", "Liberation Sans", sans-serif;
    fill: #fff;
    text-anchor: middle;
}
.go-text {
    font: bold 9px "Liberation Sans", sans-serif;
    fill: #e8e8e8;
    text-anchor: middle;
}
.help-text {
    font: bold 15px "Liberation Sans", sans-serif;
    fill: #555;
    text-anchor: middle;
}
.help-white {
    font: bold 14px "Liberation Sans", sans-serif;
    fill: #fff;
    text-anchor: middle;
}

/* title bar */
.titlebar {
    display: flex;
    align-items: center;
    height: 24px;
    padding-left: 3px;
    background-color: #fff;
}
.app-icon {
    width: 18px;
    height: 18px;
}
.title-text {
    margin-left: 2px;
    font-size: 11.800px;
    color: #8a8a8a;
}
.win-buttons {
    display: flex;
    gap: 39px;
    margin-left: auto;
    margin-right: 22px;
}
.win-buttons svg {
    width: 10px;
    height: 10px;
}

/* menu */
.menubar {
    display: flex;
    align-items: center;
    height: 30px;
    padding-left: 4px;
    gap: 7.200px;
    background-color: #cdcdcd;
    border-bottom: 1px solid #bbb;
    font-size: 11px;
    color: #444;
}

/* toolbars */
.toolbar {
    display: flex;
    align-items: center;
    height: 33px;
    padding-left: 6px;
    background-color: #d8d8d8;
    border-bottom: 1px solid #aaa;
}
.grip {
    flex: none;
    width: 4px;
    height: 24px;
    margin-right: 3px;
    border-left: 1px solid #b5b5b5;
    border-right: 1px solid #b5b5b5;
}
.tb {
    display: flex;
    flex: none;
    align-items: center;
    justify-content: center;
    width: 29.400px;
}
.tb svg {
    width: 20px;
    height: 20px;
    overflow: visible;
}
.sep {
    flex: none;
    width: 1px;
    height: 28px;
    margin: 0 3px;
    background-color: #c2c2c2;
}
.sep.tight {
    margin: 0 1px 0 5px;
}
.sep.double {
    width: 3px;
    margin: 0 3px 0 5px;
    background: none;
    border-left: 1px solid #bbb;
    border-right: 1px solid #bbb;
}
.tb-text {
    display: flex;
    align-items: center;
    gap: 3px;
    margin-top: -1px;
    font: bold 7.500px/9px "DejaVu Sans Mono", monospace;
    letter-spacing: -0.2px;
    color: #444;
}
.tb-text svg {
    width: 11px;
    height: 11px;
}
.tb-text.link {
    margin-left: 10px;
}
.tb-text.quote {
    margin-left: 16px;
}
.layerbar {
    display: flex;
    align-items: center;
    height: 33px;
    padding-left: 6px;
    background-color: #eee;
}
.layerbar .grip {
    margin-right: 0;
}
.grid-btn {
    width: 27px;
    padding-left: 7px;
}
.grid-btn svg {
    width: 20px;
    height: 22px;
    overflow: visible;
}
.layerbar .sep {
    margin: 0 9px 0 8px;
}
.layer-label {
    width: 37px;
    font-size: 10.300px;
    color: #555;
}
.layer-combo {
    display: flex;
    align-items: center;
    width: 118px;
    height: 22px;
    padding-left: 4px;
    background-color: #fff;
    border: 1px solid #aaa;
}
.swatch {
    width: 16px;
    height: 16px;
    margin-right: 5px;
    background-color: #a00a0a;
}
.layer-name {
    font-size: 10.500px;
}
.tri {
    width: 6px;
    height: 4px;
    margin-left: auto;
}
.layer-combo .tri {
    margin-right: 5px;
}

/* layout below the toolbars */
.main {
    display: flex;
    flex: 1;
    min-height: 0;
}

/* command strip */
.toolstrip {
    flex: none;
    width: 57px;
    margin-top: 2px;
    background-color: #efefef;
}
.strip-grip {
    height: 13px;
    margin: 0 6px;
    padding-top: 4px;
}
.strip-grip::before {
    content: "";
    display: block;
    height: 4px;
    border-top: 1px solid #ccc;
    border-bottom: 1px solid #ccc;
}
.tool-group {
    display: grid;
    grid-template-columns: 27px 27px;
    grid-auto-rows: 27.500px;
    padding-left: 1.500px;
    padding-bottom: 0.500px;
    border-bottom: 1px solid #d0d0d0;
    place-items: center;
}
.tool-group.last {
    border-bottom: none;
}
.tool-group svg {
    width: 20px;
    height: 20px;
    fill: none;
    stroke: #666;
    stroke-width: 1.100;
    overflow: visible;
}
.tool-group svg.warn {
    margin-top: 2px;
}
.tool-group .solid {
    fill: #666;
    stroke: none;
}
.tool-group .black {
    fill: #111;
    stroke: none;
}
.tool-group .white {
    fill: #fff;
}
.tool-group .node {
    fill: #16a34a;
    stroke: none;
}
.tool-group .dim-node {
    fill: #7bab52;
    stroke: none;
}
.tool-group .faded {
    opacity: 0.7;
}
.letter {
    font: 600 25px "Open Sans", sans-serif;
    fill: #222;
    stroke: none;
    text-anchor: middle;
}
.r-text {
    font: bold 10px "Liberation Sans", sans-serif;
    fill: #333;
    stroke: none;
    text-anchor: middle;
}
.r-text.dim {
    fill: #aaa;
}
.erc-text {
    font: 10px "Liberation Sans", sans-serif;
    fill: #555;
    stroke: none;
    text-anchor: middle;
}

/* design manager */
.dock {
    display: flex;
    flex: none;
    flex-direction: column;
    width: 334px;
    margin-left: 1px;
    margin-top: 2px;
    margin-right: 4px;
}
.dock-head {
    display: flex;
    align-items: center;
    justify-content: flex-end;
    flex: none;
    position: relative;
    height: 28px;
    padding-right: 3px;
    background-color: #d9d9d9;
}
.dock-head span {
    position: absolute;
    left: 118px;
    margin-top: -2px;
}
.dock-btn {
    width: 9px;
    height: 9px;
}
.dock-btn.pin {
    margin-right: 6px;
}
.tabs {
    display: flex;
    flex: none;
    height: 37px;
    padding: 10px 13px 0 11px;
    gap: 3px;
}
.tab {
    width: 57px;
    height: 25px;
    line-height: 24px;
    text-align: center;
    background-color: #d9d9d9;
}
.tab.active {
    width: 52px;
    color: #1f8fd0;
    background-color: #f5f5f5;
    border-bottom: 2px solid #1f8fd0;
}
.tab-tools {
    display: flex;
    gap: 4px;
    margin-left: auto;
}
.square-btn {
    display: flex;
    align-items: center;
    justify-content: center;
    width: 24px;
    height: 24px;
    background-color: #d9d9d9;
}
.square-btn svg {
    width: 15px;
    height: 15px;
}
.dock-body {
    flex: none;
    height: 640px;
    margin: 0 9px 0 8px;
    padding: 10px 8px 0;
    background-color: #f7f7f7;
    border: 1px solid #e6e6e6;
}
.sec-head {
    display: flex;
    align-items: center;
    gap: 5px;
    height: 18px;
    font-size: 10.400px;
}
.sec-title {
    font-size: 9.800px;
}
.sec-head i {
    flex: 1;
    height: 1px;
    background-color: #999;
}
.search-row {
    display: flex;
    align-items: center;
    margin-top: 3px;
}
.search {
    display: flex;
    align-items: center;
    width: 251px;
    height: 22px;
    padding: 0 5px;
    background-color: #fff;
    border: 1px solid #999;
}
.search .find {
    width: 16px;
    height: 16px;
    margin-right: 4px;
}
.search span {
    color: #aaa;
}
.wrench {
    position: relative;
    margin-left: 17px;
}
.wrench svg:first-child {
    width: 20px;
    height: 20px;
}
.wrench .tri {
    position: absolute;
    right: -6px;
    bottom: -4px;
}
.list {
    margin-top: 6px;
    border-top: 2px solid #e4e4e4;
    background-color: #fbfbfb;
}
.nets {
    height: 150px;
}
.signals {
    height: 150px;
}
.items {
    height: 132px;
}
.thead, .trow {
    display: grid;
}
.thead {
    text-align: center;
    line-height: 12px;
}
.sorted {
    position: relative;
}
.sorted::before {
    content: "";
    position: absolute;
    top: -2px;
    left: 50%;
    width: 5px;
    height: 5px;
    margin-left: -3px;
    border-top: 1px solid #999;
    border-left: 1px solid #999;
    transform: rotate(45deg);
}
.nets .thead {
    grid-template-columns: 64px 78px 86px 70px;
    height: 23px;
    align-items: center;
    line-height: 11.500px;
}
.nets .thead span {
    margin-top: -2px;
}
.nets .thead .sorted {
    margin-top: 3px;
}
.nets .trow {
    grid-template-columns: 64px 72px 82px 75px;
}
.trow {
    height: 13px;
    line-height: 13px;
    padding-left: 2px;
}
.trow span:not(:first-child) {
    text-align: right;
}
.trow.selected {
    color: #fff;
    background-color: #0c8fd3;
}
.trow.alt {
    background-color: #f0f0f0;
}
.splitter {
    height: 15px;
    border-top: 6px solid #eee;
}
.splitter.thin {
    height: 16px;
    border-top-width: 5px;
}
.signals .thead {
    grid-template-columns: 52px 48px 1fr;
    height: 16px;
    padding-top: 2px;
}
.col-t {
    text-align: left;
    padding-left: 8px;
}
.signals .trow {
    grid-template-columns: 52px 40px 75px 85px 43px;
}
.items .thead {
    grid-template-columns: 107px 97px 95px;
    height: 15px;
}
.col-name {
    padding-left: 18px;
}
.hbar {
    display: flex;
    align-items: center;
    background-color: #f0f0f0;
}
.hbar svg {
    width: 8px;
    height: 11px;
}
.hbar-track {
    flex: 1;
    height: 100%;
}
.hbar-thumb {
    height: 100%;
    background-color: #cacaca;
}
.dock-hbar {
    height: 16px;
    padding: 0 6px;
}
.dock-hbar .hbar-track {
    margin: 0 5px;
}
.dock-hbar .hbar-thumb {
    width: 95px;
}
.work-hbar {
    flex: none;
    height: 19px;
    width: 1187px;
    padding: 0 3px 0 4px;
    border-bottom: 2px solid #eee;
}
.work-hbar .hbar-track {
    margin: 0 6px;
}
.work-hbar .hbar-thumb {
    width: 192px;
    margin-left: 273px;
}

/* board editor */
.work {
    display: flex;
    flex: 1;
    flex-direction: column;
    min-width: 0;
}
.cmdbar {
    display: flex;
    flex: none;
    align-items: center;
    height: 29px;
    padding-left: 6px;
    padding-right: 4px;
    padding-bottom: 1px;
}
.coords {
    width: 110px;
    font-size: 10.300px;
}
.cmdline {
    display: flex;
    flex: 1;
    align-items: center;
    height: 22px;
    padding: 0 4px 0 5px;
    font-size: 10.800px;
    color: #888;
    background-color: #d2d2d2;
    border: 1px solid #aaa;
}
.viewport {
    display: flex;
    flex: 1;
    min-height: 0;
}
.canvas {
    position: relative;
    flex: 1;
    background-color: #000;
}
.board {
    width: 100%;
    height: 100%;
}
.side-tab {
    position: absolute;
    right: 3px;
    display: flex;
    flex-direction: column;
    align-items: center;
    width: 23px;
    padding-top: 6px;
    gap: 4px;
    background-color: #444;
}
.side-tab svg {
    width: 14px;
    height: 14px;
}
.side-tab span {
    writing-mode: vertical-rl;
    font-size: 10px;
    font-weight: 600;
    color: #ddd;
}
.manufacturing {
    top: 8px;
    height: 120px;
}
.fusion {
    top: 142px;
    height: 121px;
    padding-top: 16px;
    gap: 8px;
}
.vbar {
    display: flex;
    flex: none;
    flex-direction: column;
    align-items: center;
    width: 17px;
    padding: 5px 0 3px;
    background-color: #f0f0f0;
}
.vbar svg {
    width: 11px;
    height: 7px;
}
.vbar-track {
    flex: 1;
    width: 100%;
}
.vbar-thumb {
    width: 100%;
    height: 110px;
    margin-top: 107px;
    background-color: #cacaca;
}

/* status bar */
.statusbar {
    display: flex;
    flex: none;
    justify-content: flex-end;
    height: 21px;
    background-color: #eee;
    border-top: 1px solid #aaa;
}
.status-cell {
    display: flex;
    align-items: center;
    justify-content: center;
    width: 21px;
    border-left: 1px solid #ddd;
}
.status-cell svg {
    width: 18px;
    height: 18px;
}

/* taskbar */
.taskbar {
    display: flex;
    flex: none;
    height: 42px;
    color: #eee;
    background-color: #0a0a0a;
}
.start {
    display: flex;
    align-items: center;
    justify-content: center;
    width: 50px;
}
.start svg {
    width: 18px;
    height: 18px;
}
.task-search {
    display: flex;
    align-items: center;
    width: 358px;
    padding-left: 10px;
    background-color: #f2f2f2;
    font-size: 13.800px;
    color: #333;
}
.cortana {
    width: 24px;
    height: 24px;
    margin-right: 8px;
}
.mic {
    width: 16px;
    height: 20px;
    margin-left: auto;
    margin-right: 13px;
}
.task-icons {
    display: flex;
}
.task-app {
    display: flex;
    align-items: center;
    justify-content: center;
    position: relative;
    width: 52px;
    height: 42px;
}
.task-app svg {
    width: 24px;
    height: 24px;
}
.task-app.taskview svg {
    width: 18px;
    height: 20px;
}
.task-app.open::after {
    content: "";
    position: absolute;
    left: 4px;
    right: 4px;
    bottom: 0;
    height: 3px;
    background-color: #64a8e0;
}
.task-app.current {
    background-color: #3c3c3c;
}
.eagle-e {
    font: bold 31px "Liberation Serif", serif;
    color: #c47c28;
}
.tray {
    display: flex;
    align-items: center;
    flex: 1;
}
.tray-help {
    margin-left: 464px;
}
.tray-help svg {
    width: 26px;
    height: 26px;
}
.tray-people {
    width: 19px;
    height: 19px;
    margin-left: 23px;
}
.tray-chevron {
    width: 15px;
    height: 9px;
    margin-left: 19px;
}
.tray-battery {
    width: 18px;
    height: 13px;
    margin-left: 8px;
}
.tray-cloud {
    width: 18px;
    height: 13px;
    margin-left: 8px;
}
.tray-avira {
    width: 17px;
    height: 17px;
    margin-left: 8px;
    background-color: #d0111c;
}
.tray-wifi {
    width: 15px;
    height: 15px;
    margin-left: 10px;
}
.tray-mute {
    width: 17px;
    height: 13px;
    margin-left: 7px;
}
.clock {
    display: flex;
    flex-direction: column;
    align-items: center;
    width: 80px;
    margin-left: 3px;
    font-size: 12px;
    line-height: 19px;
}
.tray-notify {
    width: 18px;
    height: 16px;
    margin-left: 9px;
}

/* export dialog */
.dialog {
    position: absolute;
    left: 188px;
    top: 279px;
    width: 258px;
    height: 210px;
    font-size: 9.700px;
    background-color: #f0f0f0;
    border: 1px solid #4a90d9;
    box-shadow: 0 0 4px rgba(0, 0, 0, 0.2);
}
.dlg-title {
    display: flex;
    align-items: center;
    height: 31px;
    padding: 0 12px 0 8px;
    font-size: 12px;
    color: #333;
    background-color: #fff;
}
.dlg-title svg {
    width: 16px;
    height: 16px;
    margin-right: 4px;
}
.dlg-title .dlg-close {
    width: 11px;
    height: 11px;
    margin: 0 0 0 auto;
}
.dlg-body {
    padding: 11px 10px 0;
}
.dlg-grid {
    display: grid;
    grid-template-columns: 55px 96px 77px;
    grid-template-rows: 21px 12px 19px 20px 20px;
    row-gap: 6.500px;
    align-items: center;
}
.dlg-grid > :nth-child(3n) {
    margin-left: 7px;
}
.field {
    display: flex;
    align-items: center;
    height: 100%;
    padding-left: 8px;
    font-size: 10.200px;
    background-color: #fff;
    border: 1px solid #aaa;
}
.field.readonly {
    color: #999;
    background-color: #f6f6f6;
}
.field.combo {
    padding: 0 6px 0 4px;
}
.spin-btns {
    display: flex;
    flex-direction: column;
    justify-content: space-around;
    align-items: center;
    width: 11px;
    height: 100%;
    margin-left: auto;
    border-left: 1px solid #ccc;
}
.spin-btns svg {
    width: 6px;
    height: 4px;
}
.check {
    display: flex;
    align-items: center;
    gap: 7px;
    font-size: 9.300px;
    white-space: nowrap;
}
.box {
    flex: none;
    width: 12px;
    height: 12px;
    background-color: #fff;
    border: 1px solid #888;
    border-radius: 2px;
}
.box svg {
    width: 10px;
    height: 10px;
}
.btn {
    display: flex;
    align-items: center;
    justify-content: center;
    width: 65px;
    height: 21px;
    font-size: 10.500px;
    background-color: #fff;
    border: 1px solid #aaa;
    border-radius: 2px;
}
.btn.wide {
    width: 77px;
    height: 21px;
}
.btn.default {
    width: 66px;
    border-color: #3a9ad9;
    border-width: 1.500px;
}
.dlg-buttons {
    display: flex;
    justify-content: flex-end;
    gap: 6px;
    margin-top: 15px;
}
```
